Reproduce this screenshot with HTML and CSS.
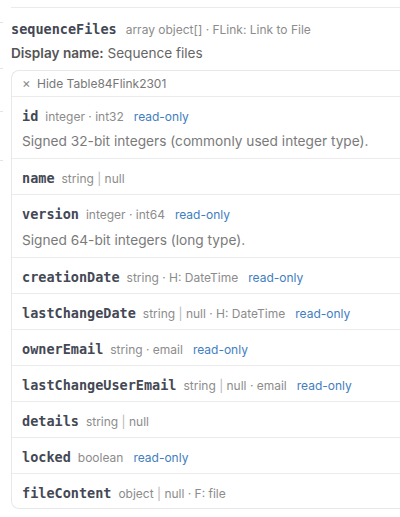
FILE: index.html
```html
<!DOCTYPE html>
<html>
<head>
<meta charset="utf-8">
<link rel="stylesheet" href="styles.css">
</head>
<body>
<div class="edge">
  <span class="tick t1"></span>
  <span class="tick t2"></span>
  <span class="tick t3"></span>
  <span class="tick t4"></span>
</div>
<div class="prop">
  <div class="head">
    <span class="pname">sequenceFiles</span>
    <span class="meta">array object[] · FLink: Link to File</span>
  </div>
  <div class="display"><b>Display name:</b> Sequence files</div>
  <div class="box">
    <div class="toggle"><span class="x">×</span> Hide Table84Flink2301</div>
    <div class="row">
      <div class="line"><span class="name">id</span><span class="meta">integer · int32</span><span class="ro">read-only</span></div>
      <div class="desc">Signed 32-bit integers (commonly used integer type).</div>
    </div>
    <div class="row">
      <div class="line"><span class="name">name</span><span class="meta">string <span class="bar">|</span> null</span></div>
    </div>
    <div class="row">
      <div class="line"><span class="name">version</span><span class="meta">integer · int64</span><span class="ro">read-only</span></div>
      <div class="desc">Signed 64-bit integers (long type).</div>
    </div>
    <div class="row">
      <div class="line"><span class="name">creationDate</span><span class="meta">string · H: DateTime</span><span class="ro">read-only</span></div>
    </div>
    <div class="row">
      <div class="line"><span class="name">lastChangeDate</span><span class="meta">string <span class="bar">|</span> null · H: DateTime</span><span class="ro">read-only</span></div>
    </div>
    <div class="row">
      <div class="line"><span class="name">ownerEmail</span><span class="meta">string · email</span><span class="ro">read-only</span></div>
    </div>
    <div class="row">
      <div class="line"><span class="name">lastChangeUserEmail</span><span class="meta">string <span class="bar">|</span> null · email</span><span class="ro">read-only</span></div>
    </div>
    <div class="row">
      <div class="line"><span class="name">details</span><span class="meta">string <span class="bar">|</span> null</span></div>
    </div>
    <div class="row">
      <div class="line"><span class="name">locked</span><span class="meta">boolean</span><span class="ro">read-only</span></div>
    </div>
    <div class="row">
      <div class="line"><span class="name">fileContent</span><span class="meta">object <span class="bar">|</span> null · F: file</span></div>
    </div>
  </div>
</div>
</body>
</html>
```
FILE: styles.css
```css
html, body {
  margin: 0;
  padding: 0;
  background: #ffffff;
}
body {
  font-family: Inter, "Noto Sans", sans-serif;
  color: #555;
  position: relative;
  overflow: hidden;
  width: 400px;
  height: 517px;
}
.edge {
  position: absolute;
  left: 0;
  top: 0;
  width: 3px;
  height: 517px;
}
.tick {
  position: absolute;
  left: 0;
  width: 3px;
  height: 1px;
  background: #e4e4e4;
}
.t1 { top: 22px; }
.t2 { top: 68px; }
.t3 { top: 111px; }
.t4 { top: 160px; }
.prop {
  margin-left: 11px;
  margin-top: 7px;
  border-top: 1px solid #ebebeb;
  padding-top: 13px;
}
.head {
  display: flex;
  align-items: baseline;
  gap: 9px;
  height: 20px;
}
.pname, .name {
  font-family: "DejaVu Sans Mono", monospace;
  font-weight: bold;
  font-size: 13.5px;
  color: #434854;
}
.meta {
  font-size: 12px;
  color: #8c8c8c;
}
.bar {
  color: #b5b5b5;
}
.ro {
  font-size: 12px;
  color: #3f7ec0;
}
.display {
  font-size: 13.6px;
  color: #666;
  margin-top: 4px;
  height: 19px;
}
.display b {
  color: #555;
  font-weight: 600;
}
.box {
  margin-top: 6px;
  border: 1px solid #e8e8e8;
  border-right: none;
  border-radius: 8px 0 0 8px;
  width: 400px;
}
.toggle {
  font-size: 12px;
  color: #777;
  padding: 5px 10px 5px 10px;
  height: 15px;
  line-height: 15px;
  border-bottom: 1px solid #ebebeb;
}
.x {
  font-size: 13px;
  margin-right: 3px;
  color: #888;
}
.row {
  padding: 10px 10px 7px 10px;
  border-bottom: 1px solid #ebebeb;
}
.row:last-child {
  border-bottom: none;
  padding-bottom: 6px;
}
.line {
  display: flex;
  align-items: baseline;
  gap: 7px;
  height: 18px;
  line-height: 18px;
}
.line .ro {
  margin-left: 3px;
}
.desc {
  font-size: 13.7px;
  color: #7a7a7a;
  margin-top: 6px;
  line-height: 20px;
}
.row:nth-child(4) .desc {
  margin-top: 7px;
}
```
